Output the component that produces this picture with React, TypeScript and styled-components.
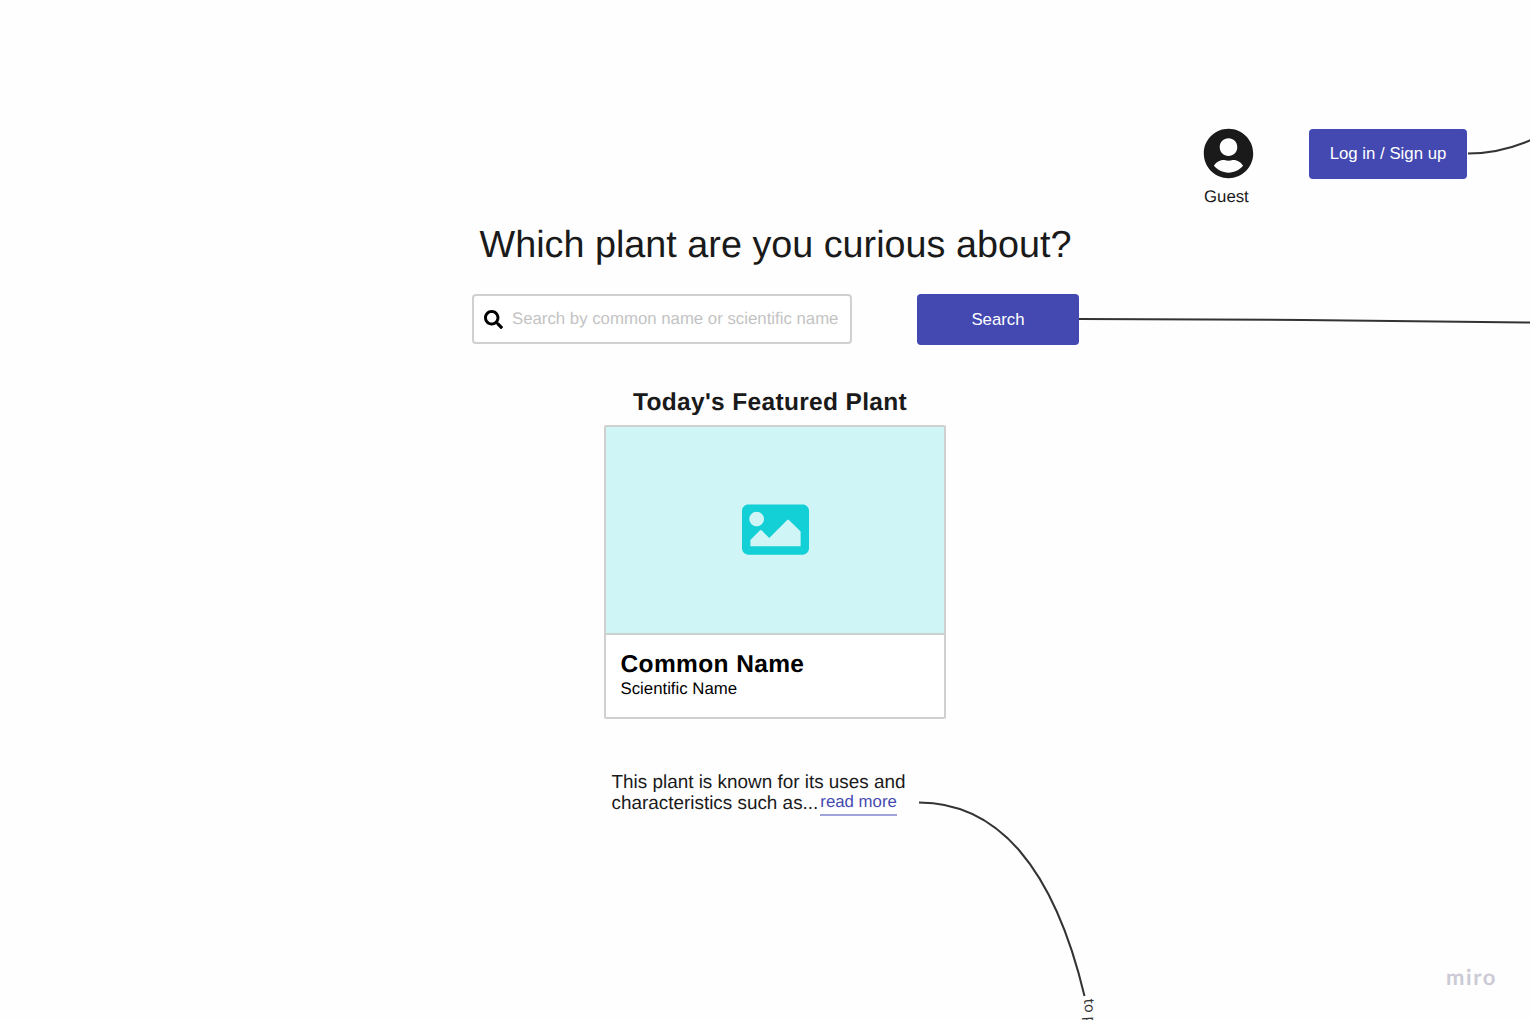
import React from "react";
import styled, { createGlobalStyle } from "styled-components";
import { FaImage, FaSearch, FaUserCircle } from "react-icons/fa";

const GlobalStyle = createGlobalStyle`
  body { margin: 0; background: #fff; overflow: hidden; }
  *, *::before, *::after { box-sizing: border-box; }
`;

const Board = styled.div`
  position: relative;
  width: 1530px;
  height: 1020px;
  overflow: hidden;
  display: flex;
  flex-direction: column;
  background: #fefefe;
  color: #1a1a1a;
  font-family: "Liberation Sans", Arial, sans-serif;
  font-size: 16.8px;
  text-rendering: geometricPrecision;
`;

const Header = styled.header`
  display: flex;
  justify-content: flex-end;
  align-items: flex-start;
  gap: 56px;
  height: 221px;
  padding: 129px 63px 0 0;
`;

const Account = styled.div`
  display: flex;
  flex-direction: column;
  width: 49px;
  line-height: 20px;

  svg {
    width: 51px;
    height: 51px;
    margin: -1px -1px 8px;
    color: #1a1a1a;
  }
`;

const Button = styled.button<{ $width: number }>`
  width: ${(p) => p.$width}px;
  min-height: 50px;
  padding: 0;
  border: 0;
  border-radius: 4px;
  background: #4349b1;
  color: #fff;
  font: inherit;
`;

const Main = styled.main`
  display: flex;
  flex-direction: column;
  align-items: center;
  width: 607px;
  margin-left: 472px;
`;

const Title = styled.h1`
  margin: 0 0 27px;
  font-size: 37.75px;
  font-weight: 400;
  line-height: 46px;
  white-space: nowrap;
`;

const SearchRow = styled.form`
  display: flex;
  justify-content: space-between;
  width: 100%;
  height: 51px;
`;

const SearchField = styled.label`
  display: flex;
  align-items: center;
  gap: 9px;
  width: 380px;
  height: 50px;
  padding: 0 10px;
  border: 2px solid #d0d0d0;
  border-radius: 4px;
  background: #fff;

  svg {
    flex: none;
    width: 19px;
    height: 19px;
    color: #000;
  }
`;

const SearchInput = styled.input`
  flex: 1;
  min-width: 0;
  padding: 0;
  border: 0;
  outline: 0;
  background: none;
  font: inherit;
  text-rendering: inherit;

  &::placeholder {
    color: #c3c3c3;
    opacity: 1;
  }
`;

const SectionTitle = styled.h2`
  margin: 43px 11px 7px 0;
  font-size: 24.5px;
  line-height: 30px;
  letter-spacing: 0.33px;
  white-space: nowrap;
`;

const Card = styled.article`
  width: 342px;
  height: 294px;
  margin-right: 1px;
  border: 2px solid #d0d0d0;
  border-radius: 2px;
  background: #fff;
  color: #000;
`;

const Picture = styled.div`
  display: flex;
  align-items: center;
  justify-content: center;
  height: 208px;
  padding-bottom: 2px;
  border-bottom: 2px solid #c9d1d1;
  background: #cff5f6;

  svg {
    width: 67px;
    height: 67px;
    color: #13cfd6;
  }
`;

const Caption = styled.div`
  padding: 15px 14.5px 0;
  line-height: 20px;
`;

const CommonName = styled.h3`
  margin: 0;
  font-size: 24.5px;
  line-height: 29px;
  letter-spacing: 0.38px;
`;

const Summary = styled.p`
  width: 328px;
  margin: 53px 0 0;
  font-size: 18.9px;
  line-height: 21px;
  white-space: nowrap;
`;

const ReadMore = styled.a`
  display: inline-block;
  height: 23px;
  margin-left: 2px;
  border-bottom: 2px solid #a1a4d8;
  color: #4349b1;
  font-size: 16.8px;
  line-height: 18px;
  vertical-align: top;
`;

const Connectors = styled.svg`
  position: absolute;
  inset: 0;
  pointer-events: none;
`;

const ConnectorLabel = styled.span`
  position: absolute;
  left: 1097px;
  top: 998px;
  color: #333;
  font-family: "Noto Sans", sans-serif;
  font-size: 14.5px;
  line-height: 16px;
  white-space: nowrap;
  transform: rotate(86deg);
  transform-origin: 0 0;
`;

const Watermark = styled.span`
  position: absolute;
  left: 1446px;
  top: 964px;
  color: #cbcad5;
  font-family: Lato, sans-serif;
  font-size: 22px;
  font-weight: 700;
  line-height: 26px;
  letter-spacing: 1.6px;
`;

export default function App() {
  return (
    <>
      <GlobalStyle />
      <Board>
        <Header>
          <Account>
            <FaUserCircle />
            Guest
          </Account>
          <Button type="button" $width={158}>Log in / Sign up</Button>
        </Header>
        <Main>
          <Title>Which plant are you curious about?</Title>
          <SearchRow>
            <SearchField>
              <FaSearch />
              <SearchInput placeholder="Search by common name or scientific name" />
            </SearchField>
            <Button type="button" $width={162}>Search</Button>
          </SearchRow>
          <SectionTitle>Today's Featured Plant</SectionTitle>
          <Card>
            <Picture>
              <FaImage />
            </Picture>
            <Caption>
              <CommonName>Common Name</CommonName>
              Scientific Name
            </Caption>
          </Card>
          <Summary>
            This plant is known for its uses and
            <br />
            characteristics such as...<ReadMore>read more</ReadMore>
          </Summary>
        </Main>
        <Connectors width="1530" height="1020" fill="none" stroke="#333" strokeWidth="2">
          <path d="M1468 153.5C1489 153.500 1510 149 1531 140" />
          <path d="M1079 319C1230 319 1380 320.500 1531 322.500" />
          <path d="M919 802.500C998 802.500 1054 868 1084.500 996" />
        </Connectors>
        <ConnectorLabel>to p</ConnectorLabel>
        <Watermark>miro</Watermark>
      </Board>
    </>
  );
}
